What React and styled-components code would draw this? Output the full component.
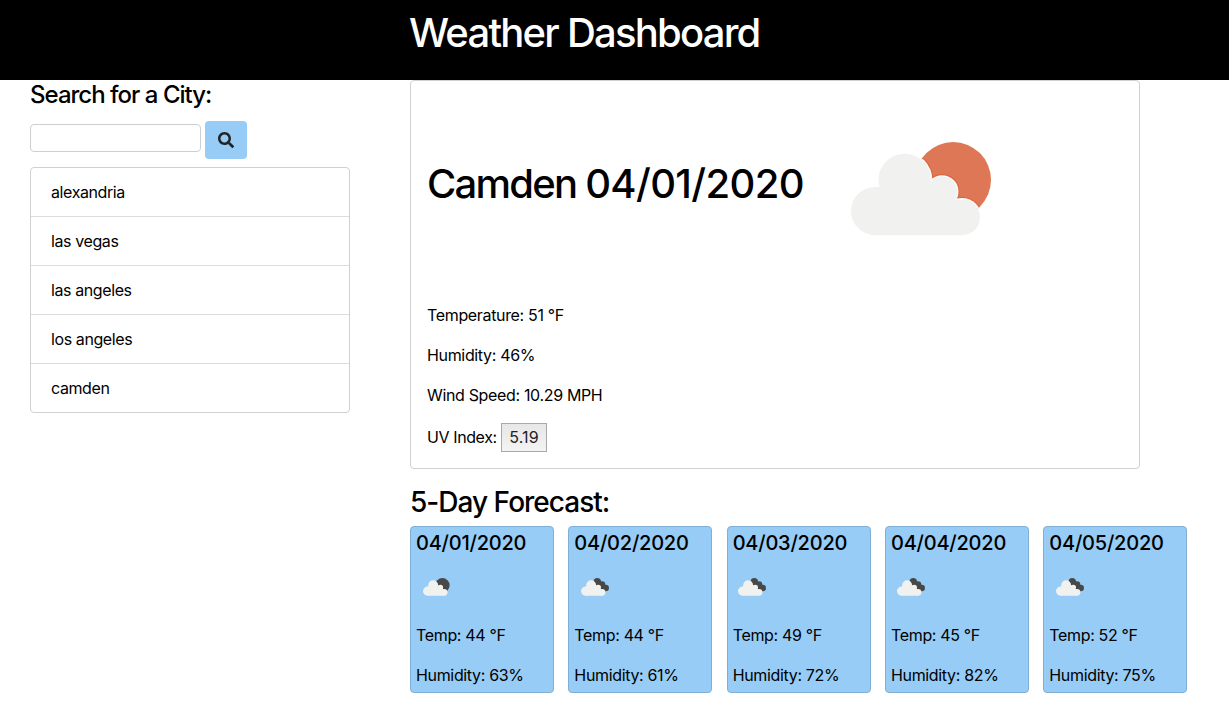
import React from "react";
import styled, { createGlobalStyle } from "styled-components";
import { FaSearch } from "react-icons/fa";

const GlobalStyle = createGlobalStyle`
  *, *::before, *::after { box-sizing: border-box; }
  body {
    margin: 0;
    background: #fff;
    color: #000;
    font-family: Inter, "Liberation Sans", sans-serif;
    font-size: 16px;
    line-height: 24px;
    letter-spacing: -0.34px;
  }
  h1, h3, h4, h5, p, ul { margin: 0; padding: 0; font-weight: 550; }
  p { font-weight: 400; }
`;

const Header = styled.header`
  height: 80px;
  padding: 9px 0 0 409px;
  background: #000;
  color: #fff;
`;

const Title = styled.h1`
  font-size: 40px;
  line-height: 48px;
  letter-spacing: -1.77px;
  white-space: nowrap;
`;

const TitleDate = styled.span`
  letter-spacing: -0.62px;
`;

const Columns = styled.div`
  display: flex;
  align-items: flex-start;
  gap: 60px;
  padding-left: 30px;
`;

const Sidebar = styled.aside`
  width: 320px;
`;

const SearchHeading = styled.h4`
  font-size: 24px;
  line-height: 29px;
  letter-spacing: -0.98px;
`;

const SearchForm = styled.form`
  display: flex;
  gap: 4px;
  margin-top: 12px;
`;

const SearchInput = styled.input`
  width: 171px;
  height: 28px;
  margin-top: 3px;
  border: 1px solid #cfcfcf;
  border-radius: 4px;
  background: #fff;
`;

const SearchButton = styled.button`
  display: flex;
  align-items: center;
  justify-content: center;
  width: 42px;
  height: 38px;
  padding: 0;
  border: 0;
  border-radius: 4px;
  background: #96ccf6;
  color: #212529;
  font-size: 16px;
`;

const CityList = styled.ul`
  margin-top: 8px;
  border: 1px solid #cfd0d2;
  border-radius: 4px;
  list-style: none;
`;

const City = styled.li`
  height: 49px;
  padding: 12px 20px;
  font-weight: 400;
  letter-spacing: -0.4px;
  border-bottom: 1px solid #dcdcdc;
  &:last-child { height: 48px; border-bottom: 0; }
`;

const Main = styled.main`
  width: 790px;
`;

const CurrentCard = styled.section`
  width: 730px;
  height: 389px;
  padding: 0 16px;
  border: 1px solid #d0d0d0;
  border-radius: 4px;
`;

const CurrentTop = styled.div`
  display: flex;
  align-items: flex-start;
  height: 222px;
  padding-top: 79px;
`;

const TitleSlot = styled.div`
  width: 424px;
`;

const IconSlot = styled.div`
  display: flex;
  margin: -17.7px 0 0 0.3px;
`;

const Readings = styled.div`
  display: flex;
  flex-direction: column;
  gap: 16px;
`;

const UvRow = styled.p`
  display: flex;
  align-items: center;
  gap: 4px;
  height: 29px;
`;

const UvLabel = styled.span`
  width: 70px;
  padding-bottom: 1px;
  letter-spacing: -0.4px;
`;

const UvBadge = styled.span`
  display: flex;
  align-items: center;
  justify-content: center;
  width: 46px;
  height: 29px;
  padding-bottom: 1px;
  border: 1px solid #a9a9a9;
  background: linear-gradient(#e7e7e7, #f3f3f3);
  color: #222;
  letter-spacing: 0.1px;
`;

const ForecastHeading = styled.h3`
  margin-top: 16px;
  font-size: 28px;
  line-height: 34px;
  letter-spacing: -0.98px;
`;

const ForecastRow = styled.div`
  display: flex;
  gap: 14.33px;
  margin-top: 7px;
`;

const DayCard = styled.article`
  width: 144px;
  height: 167px;
  padding: 4px 5px;
  border: 1px solid #7fafd4;
  border-radius: 4px;
  background: #96ccf6;
  white-space: nowrap;
`;

const DayDate = styled.h5`
  font-size: 20px;
  line-height: 24px;
  letter-spacing: -0.22px;
`;

const DayIcon = styled.div`
  height: 68px;
  padding: 23px 0 0 ${(p) => p.$inset}px;
  line-height: 0;
`;

const DayText = styled.p`
  & + & { margin-top: 16px; }
`;

const CloudShape = ({ grow = 0, fill }) => (
  <g fill={fill}>
    <circle cx="137" cy="273" r={72 + grow} />
    <circle cx="225" cy="180" r={78 + grow} />
    <circle cx="337" cy="215" r={44 + grow} />
    <circle cx="397" cy="292" r={53 + grow} />
    <path d="M137 201H225L337 215L397 250V345H137Z" />
  </g>
);

const SunCloud = ({ width, height, sun, edge, rim }) => (
  <svg width={width} height={height} viewBox="65 67 418 279">
    <defs>
      <clipPath id={"disc" + width}>
        <circle cx="370" cy="180" r="113" />
      </clipPath>
    </defs>
    <circle cx="370" cy="180" r="113" fill={sun} />
    <g clipPath={`url(#disc${width})`}>
      <CloudShape grow={8} fill={edge} />
      <CloudShape grow={5} fill={rim} />
    </g>
    <CloudShape fill="#f1f1ef" />
  </svg>
);

const BrokenClouds = () => (
  <svg width="28" height="17.8" viewBox="65 67 442 279">
    <g fill="#484848">
      <circle cx="322" cy="125" r="58" />
      <circle cx="396" cy="172" r="53" />
      <circle cx="456" cy="224" r="50" />
      <path d="M322 90L430 180V260H322Z" />
    </g>
    <CloudShape fill="#f1f1ef" />
  </svg>
);

const cities = ["alexandria", "las vegas", "las angeles", "los angeles", "camden"];

const days = [
  { date: "04/01/2020", temp: 44, humidity: 63, sky: "few", inset: 7 },
  { date: "04/02/2020", temp: 44, humidity: 61, inset: 6.3 },
  { date: "04/03/2020", temp: 49, humidity: 72, inset: 5.5 },
  { date: "04/04/2020", temp: 45, humidity: 82, inset: 6.2 },
  { date: "04/05/2020", temp: 52, humidity: 75, inset: 6.2 },
];

export default function App() {
  return (
    <>
      <GlobalStyle />
      <Header>
        <Title>Weather Dashboard</Title>
      </Header>
      <Columns>
        <Sidebar>
          <SearchHeading>Search for a City:</SearchHeading>
          <SearchForm onSubmit={(e) => e.preventDefault()}>
            <SearchInput aria-label="City" />
            <SearchButton aria-label="Search">
              <FaSearch />
            </SearchButton>
          </SearchForm>
          <CityList>
            {cities.map((c) => (
              <City key={c}>{c}</City>
            ))}
          </CityList>
        </Sidebar>
        <Main>
          <CurrentCard>
            <CurrentTop>
              <TitleSlot>
                <Title>
                  Camden <TitleDate>04/01/2020</TitleDate>
                </Title>
              </TitleSlot>
              <IconSlot>
                <SunCloud width={140} height={93.5} sun="#de7755" edge="#dc6338" rim="#f4f9fb" />
              </IconSlot>
            </CurrentTop>
            <Readings>
              <p>Temperature: 51 °F</p>
              <p>Humidity: 46%</p>
              <p>Wind Speed: 10.29 MPH</p>
              <UvRow>
                <UvLabel>UV Index:</UvLabel>
                <UvBadge>5.19</UvBadge>
              </UvRow>
            </Readings>
          </CurrentCard>
          <ForecastHeading>5-Day Forecast:</ForecastHeading>
          <ForecastRow>
            {days.map((d) => (
              <DayCard key={d.date}>
                <DayDate>{d.date}</DayDate>
                <DayIcon $inset={d.inset}>
                  {d.sky === "few" ? (
                    <SunCloud width={26.6} height={17.8} sun="#484848" edge="#484848" rim="#484848" />
                  ) : (
                    <BrokenClouds />
                  )}
                </DayIcon>
                <DayText>Temp: {d.temp} °F</DayText>
                <DayText>Humidity: {d.humidity}%</DayText>
              </DayCard>
            ))}
          </ForecastRow>
        </Main>
      </Columns>
    </>
  );
}
